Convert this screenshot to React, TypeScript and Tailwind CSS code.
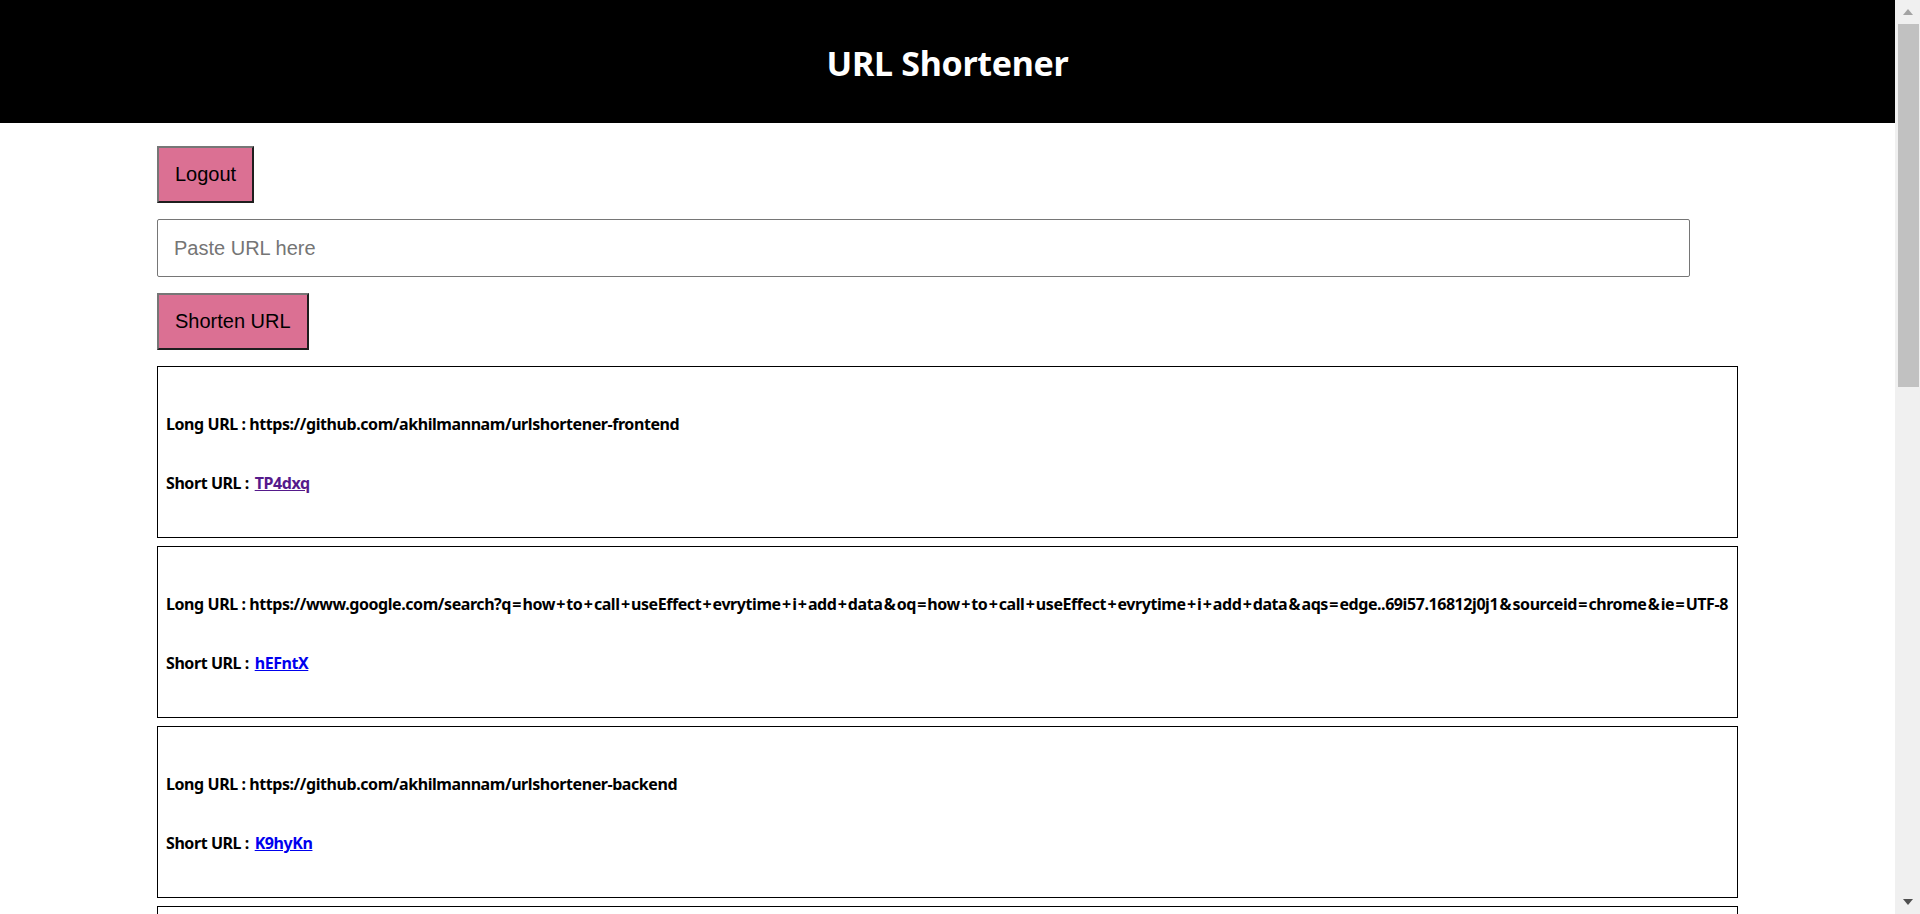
import React, { useState } from 'react';

type Link = { id: string; longUrl: string; shortUrl: string; visited?: boolean };

const links: Link[] = [
  { id: '1', longUrl: 'https://github.com/akhilmannam/urlshortener-frontend', shortUrl: 'TP4dxq', visited: true },
  {
    id: '2',
    longUrl:
      'https://www.google.com/search?q=how+to+call+useEffect+evrytime+i+add+data&oq=how+to+call+useEffect+evrytime+i+add+data&aqs=edge..69i57.16812j0j1&sourceid=chrome&ie=UTF-8',
    shortUrl: 'hEFntX',
  },
  { id: '3', longUrl: 'https://github.com/akhilmannam/urlshortener-backend', shortUrl: 'K9hyKn' },
  { id: '4', longUrl: 'https://github.com/akhilmannam', shortUrl: 'Qw7rTz' },
  { id: '5', longUrl: 'https://www.npmjs.com/package/shortid', shortUrl: 'mB3pLs' },
  { id: '6', longUrl: 'https://reactjs.org/docs/hooks-effect.html', shortUrl: 'Xa9KdE' },
];

const btn =
  "bg-[#db7093] text-black text-[20px] leading-[23px] px-4 py-[15px] border-2 border-t-[#767676] border-l-[#767676] border-r-[#1e1e1e] border-b-[#1e1e1e] font-['Liberation_Sans',Arial,sans-serif] cursor-pointer";

// + = & are wider in the original font, give them a bit of room
const UrlText: React.FC<{ text: string }> = ({ text }) => (
  <>
    {text.split(/([+=&])/).map((part, i) =>
      /^[+=&]$/.test(part) ? (
        <span key={i} className="mx-[1.35px]">
          {part}
        </span>
      ) : (
        part
      )
    )}
  </>
);

const Scrollbar: React.FC = () => (
  <div className="w-[25px] shrink-0 h-[914px] bg-[#f0f0f0] flex flex-col items-center">
    <div className="h-[24px] w-full flex items-center justify-center">
      <svg width="10" height="6" viewBox="0 0 10 6">
        <polygon points="5,0 10,6 0,6" fill="#a3a3a3" />
      </svg>
    </div>
    <div className="w-[21px] h-[363px] bg-[#c1c1c1] ml-[2px]" />
    <div className="flex-1" />
    <div className="h-[24px] w-full flex items-center justify-center">
      <svg width="10" height="6" viewBox="0 0 10 6">
        <polygon points="0,0 10,0 5,6" fill="#505050" />
      </svg>
    </div>
  </div>
);

export default function App() {
  const [url, setUrl] = useState('');

  return (
    <div className="flex h-[914px] overflow-hidden bg-white">
      <div className="flex-1 h-[914px] overflow-hidden">
        <header className="h-[123px] pt-[4px] bg-black flex items-center justify-center">
          <h1 className="text-white text-[34px] font-bold tracking-[-0.3px] font-['Noto_Sans',sans-serif]">
            URL Shortener
          </h1>
        </header>

        <main className="px-[157px] pt-[23px] flex flex-col">
          <div>
            <button className={btn}>Logout</button>
          </div>

          <input
            type="text"
            value={url}
            onChange={(e) => setUrl(e.target.value)}
            placeholder="Paste URL here"
            className="mt-4 w-[1533px] h-[58px] px-4 border border-[#767676] rounded-[2px] text-[20px] font-['Liberation_Sans',Arial,sans-serif] placeholder:text-[#757575] outline-none"
          />

          <div className="mt-4">
            <button className={btn}>Shorten URL</button>
          </div>

          <div className="mt-4 flex flex-col gap-2">
            {links.map((l) => (
              <div
                key={l.id}
                className="border border-black pl-2 pt-[47px] pb-[43px] flex flex-col gap-[38px] font-['Noto_Sans',sans-serif] font-bold text-[16px] leading-[21px] tracking-[-0.43px] text-black"
              >
                <h4 className="whitespace-nowrap">
                  Long URL : <UrlText text={l.longUrl} />
                </h4>
                <h4>
                  Short URL :{' '}
                  <a
                    href={'#' + l.shortUrl}
                    className={'ml-[2px] underline ' + (l.visited ? 'text-[#551a8b]' : 'text-[#0000ee]')}
                  >
                    {l.shortUrl}
                  </a>
                </h4>
              </div>
            ))}
          </div>
        </main>
      </div>
      <Scrollbar />
    </div>
  );
}
